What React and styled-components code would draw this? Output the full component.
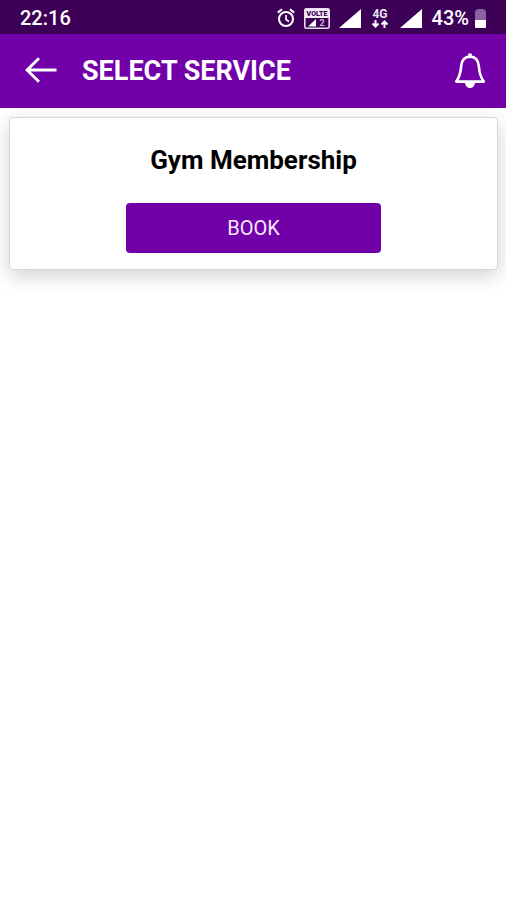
import React from 'react'
import styled, { createGlobalStyle, css } from 'styled-components'

const colors = {
  status: '#3c0057',
  primary: '#7200a9',
}

const flexRow = css`
  display: flex;
  align-items: center;
`

const AlarmIcon = () =>
  <svg width='18' height='20' viewBox='0 0 18 20' fill='none' stroke='#fff' strokeWidth='2'>
    <circle cx='9' cy='11' r='7' />
    <path d='M9 7v4.5l3 2' strokeWidth='1.6' />
    <path d='M.8 4.6 5 1.2M17.2 4.6 13 1.2' />
  </svg>

const VolteIcon = () =>
  <svg width='26' height='21' viewBox='0 0 26 21' fill='none'>
    <rect x='.8' y='.8' width='24.4' height='19.4' rx='1.5' stroke='#e9dcf0' strokeWidth='1.6' />
    <path d='M1 1h24v9H1z' fill='#f3eaf7' />
    <text x='13' y='8' fill={colors.status} fontSize='7' fontWeight='900' textAnchor='middle'>VOLTE</text>
    <path d='M4 18.500l8-7.500v7.500z' fill='#fff' />
    <text x='18' y='18' fill='#cdb6da' fontSize='9' fontWeight='700' textAnchor='middle'>2</text>
  </svg>

const SignalIcon = () =>
  <svg width='22' height='19' viewBox='0 0 22 19'>
    <path d='M22 0v19H0z' fill='#fff' />
  </svg>

const DataIcon = () =>
  <svg width='21' height='26' viewBox='0 0 21 26' fill='none' stroke='#fff' strokeWidth='2'>
    <text x='10' y='13' fill='#eee3f4' stroke='none' fontSize='12' fontWeight='700' textAnchor='middle'>4G</text>
    <path d='M5.500 15v6M2.500 18.500l3 3 3-3M14.500 23v-6M11.500 19.500l3-3 3 3' />
  </svg>

const BatteryIcon = () =>
  <svg width='11' height='19' viewBox='0 0 11 19'>
    <path d='M3 0h5q3 1 3 3v8H0V3q0-2 3-3z' fill='#8a62a0' />
    <path d='M0 11h11v7q0 1-1 1H1q-1 0-1-1z' fill='#fff' />
  </svg>

const BackIcon = () =>
  <svg width='32' height='28' viewBox='0 0 32 28' fill='none' stroke='#fff' strokeWidth='2.8'>
    <path d='M31.5 13H2M14 1.2 2 13l12 11.8' />
  </svg>

const BellIcon = () =>
  <svg width='32' height='36' viewBox='0 0 32 36' fill='none' stroke='#fff' strokeWidth='2.6'>
    <path
      d='M16 3.6c-5 0-8.200 3.200-8.800 9.400C6.600 20.600 5.800 24 2.200 28.600h27.600C26.200 24 25.400 20.600 24.800 13c-.6-6.200-3.800-9.400-8.800-9.400z'
      strokeLinejoin='round'
    />
    <path d='M16 .5v3' strokeWidth='3.6' />
    <path d='M11 30h10c-.4 3-2.4 5-5 5s-4.6-2-5-5z' fill='#fff' stroke='none' />
  </svg>

const App = () =>
  <Page>
    <GlobalStyle />
    <StatusBar>
      <Clock>22:16</Clock>
      <StatusIcons>
        <AlarmIcon />
        <VolteIcon />
        <SignalIcon />
        <DataIcon />
        <SignalIcon />
        <Battery>
          43%
          <BatteryIcon />
        </Battery>
      </StatusIcons>
    </StatusBar>
    <Header>
      <IconButton aria-label='Back'><BackIcon /></IconButton>
      <Title>SELECT SERVICE</Title>
      <IconButton aria-label='Notifications'><BellIcon /></IconButton>
    </Header>
    <Main>
      <Card>
        <ServiceName>Gym Membership</ServiceName>
        <BookButton>BOOK</BookButton>
      </Card>
    </Main>
  </Page>

export default App

const GlobalStyle = createGlobalStyle`
  * {
    box-sizing: border-box;
  }
  body {
    margin: 0;
    background: #fff;
    font-family: Roboto, sans-serif;
  }
  svg {
    display: block;
    flex-shrink: 0;
  }
`

const Page = styled.div`
  min-height: 100vh;
`

const StatusBar = styled.div`
  ${flexRow};
  justify-content: space-between;
  height: 34px;
  padding: 2px 20px 0;
  background: ${colors.status};
  color: #fff;
  font-size: 20px;
  font-weight: 500;
`

const Clock = styled.time`
  line-height: 24px;
`

const StatusIcons = styled.div`
  ${flexRow};
  gap: 9px;
`

const Battery = styled.span`
  ${flexRow};
  gap: 6px;
  padding-left: 1px;
  line-height: 24px;
`

const Header = styled.header`
  ${flexRow};
  height: 74px;
  padding: 0 20px 0 25px;
  background: ${colors.primary};
  color: #fff;
`

const Title = styled.h1`
  flex: 1;
  margin: 0 0 0 25px;
  font-size: 27px;
  font-weight: 700;
  line-height: 32px;
`

const IconButton = styled.button`
  padding: 0;
  border: 0;
  background: none;
  cursor: pointer;
`

const Main = styled.main`
  padding: 9px 8px 10px 9px;
`

const Card = styled.section`
  display: flex;
  flex-direction: column;
  align-items: center;
  gap: 27px;
  padding: 26px 16px 16px;
  border: 1px solid #d6d6d6;
  border-radius: 4px;
  background: #fff;
  box-shadow: 0 6px 20px rgba(0, 0, 0, 0.18);
`

const ServiceName = styled.h2`
  margin: 0;
  font-size: 26px;
  font-weight: 700;
  line-height: 32px;
  color: #000;
`

const BookButton = styled.button`
  width: 56%;
  height: 50px;
  border: 0;
  border-radius: 4px;
  background: ${colors.primary};
  color: #f4e8fa;
  font-family: inherit;
  font-size: 20px;
  cursor: pointer;
`
